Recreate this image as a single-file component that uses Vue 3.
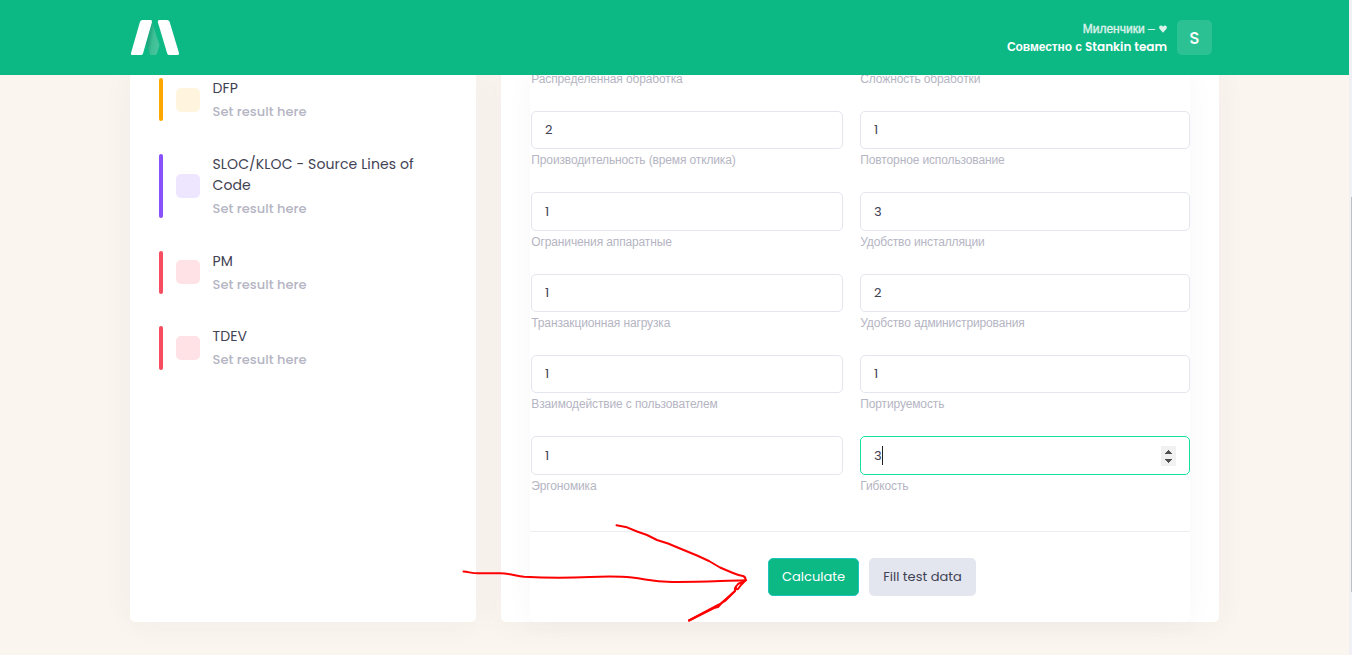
<script setup>
const metrics = [
  { title: 'DFP', tone: 'amber' },
  { title: 'SLOC/KLOC - Source Lines of Code', tone: 'violet' },
  { title: 'PM', tone: 'rose' },
  { title: 'TDEV', tone: 'rose' },
]
const rows = [
  [{ value: '2', label: 'Производительность (время отклика)' }, { value: '1', label: 'Повторное использование' }],
  [{ value: '1', label: 'Ограничения аппаратные' }, { value: '3', label: 'Удобство инсталляции' }],
  [{ value: '1', label: 'Транзакционная нагрузка' }, { value: '2', label: 'Удобство администрирования' }],
  [{ value: '1', label: 'Взаимодействие с пользователем' }, { value: '1', label: 'Портируемость' }],
  [{ value: '1', label: 'Эргономика' }, { value: '3', label: 'Гибкость', active: true }],
]
</script>

<template>
  <div class="page">
    <div class="view">
      <header class="header">
        <svg class="logo" width="50" height="36" viewBox="0 0 50 36">
          <defs>
            <linearGradient id="leaf" x1="0" y1="0.2" x2="1" y2="0.6">
              <stop offset="0" stop-color="#0a8f68" />
              <stop offset="0.55" stop-color="#3fbf96" />
              <stop offset="1" stop-color="#48c49d" />
            </linearGradient>
          </defs>
          <path d="M22 2 L29.500 25 L27 33.500 Q26.600 35 25 35 H21.500 Q20 35 19.500 33.500 L16.500 24 Z" fill="url(#leaf)" />
          <path d="M12.500 0 H20.500 Q22.500 0 22 2 L13 33.500 Q12.500 35 11 35 H2 Q0.300 35 1 33 L10 1.800 Q10.600 0 12.500 0 Z" fill="#fff" />
          <path d="M29.500 0 H37 Q39 0 39.600 1.800 L49 33 Q49.500 35 47.500 35 H39.500 Q37.700 35 37.200 33.500 L27.800 2 Q27.400 0 29.500 0 Z" fill="#fff" />
        </svg>
        <div class="user">
          <div class="names">
            <span class="team">Миленчики – <svg class="heart" width="8" height="8" viewBox="0 0 8 8"><path d="M4 7.700 L0.500 3.700 C-0.400 2 .5 .5 2 .5 Q3.300 .5 4 1.700 Q4.700 .5 6 .5 C7.500 .5 8.400 2 7.500 3.700 Z" fill="currentColor" /></svg></span>
            <span class="partner">Совместно с <span class="latin">Stankin team</span></span>
          </div>
          <span class="avatar">S</span>
        </div>
      </header>
      <main class="content">
        <section class="card side">
          <div v-for="m in metrics" :key="m.title" class="metric" :class="m.tone">
            <span class="bar"></span>
            <span class="box"></span>
            <div class="info">
              <span class="title">{{ m.title }}</span>
              <span class="sub">Set result here</span>
            </div>
          </div>
        </section>
        <section class="card main">
          <div class="form">
            <div class="row first">
              <span class="label">Распределенная обработка</span>
              <span class="label">Сложность обработки</span>
            </div>
            <div v-for="(r, i) in rows" :key="i" class="row">
              <div v-for="f in r" :key="f.label" class="field">
                <div class="input" :class="{ active: f.active }">
                  <span class="value">{{ f.value }}</span>
                  <template v-if="f.active">
                    <span class="caret"></span>
                    <svg class="spin" width="15" height="20" viewBox="0 0 15 20" shape-rendering="crispEdges">
                      <rect width="15" height="20" fill="#f1f1f1" />
                      <path d="M4 8 L7.500 4 L11 8 Z M4 13 L7.500 17 L11 13 Z" fill="#505050" />
                    </svg>
                  </template>
                </div>
                <span class="label">{{ f.label }}</span>
              </div>
            </div>
            <div class="actions">
              <button class="btn primary">Calculate</button>
              <button class="btn secondary">Fill test data</button>
            </div>
          </div>
        </section>
      </main>
      <svg class="arrow" width="300" height="110" viewBox="455 520 300 110" fill="none" stroke="#fe0000" stroke-width="2" stroke-linecap="round" stroke-linejoin="round">
        <path d="M463.500 571.500 C469 572 472 573.300 478 573.300 H500 C510 573.300 516 576 524 576.700 C548 578 570 577.800 590 577 C606 576.300 620 576.300 632 577.500 C647 579 650 581.500 672 582 C698 582.300 718 581 746 580.300" />
        <path d="M616.500 525.300 L627 527.300 L637 531.500 L647 535 L657 540 L668 543.500 L680 548.500 L697 555.500 L709 561 L720 567.500 L733 573 Q739 575.500 743 576 Q746 577 745.500 580.300 L738 584 L735 588 L735 591 L725 601 L719 604.500 L689 620.500" />
        <path d="M745.500 580.300 L741 585 L738 589 Q735 590 736 586.500 M735 591 L722 602.500 L718 607 L714 608 L689 620.500" />
      </svg>
    </div>
    <div class="scroll"><span class="thumb"></span></div>
  </div>
</template>

<style>
body { margin: 0; }
</style>

<style scoped>
.page { width: 1352px; height: 655px; display: flex; overflow: hidden; background: #faf5ef; font-family: Poppins, Inter, "Liberation Sans", sans-serif; font-size: 13px; color: #3f4254; }
.page * { box-sizing: border-box; }
.view { position: relative; width: 1349px; height: 655px; overflow: hidden; }
.header { position: relative; z-index: 2; height: 75px; padding: 0 137px 0 130px; display: flex; align-items: center; justify-content: space-between; background: #0cb884; color: #fff; }
.user { display: flex; align-items: center; gap: 10px; }
.names { display: flex; flex-direction: column; align-items: flex-end; font-family: "Liberation Sans", sans-serif; font-size: 12px; line-height: 18px; white-space: nowrap; }
.team { opacity: .85; -webkit-text-stroke: .35px; }
.heart { margin-left: 1px; }
.partner { font-weight: 700; letter-spacing: -.08px; }
.latin { font-family: Poppins, Inter, sans-serif; font-size: 12px; font-weight: 600; letter-spacing: 0; }
.avatar { width: 35px; height: 35px; border-radius: 5px; background: rgba(255,255,255,.13); display: flex; align-items: center; justify-content: center; font-size: 17px; font-weight: 500; }
.content { display: flex; gap: 25px; padding-left: 130px; height: 547px; }
.card { background: #fff; border-radius: 0 0 5px 5px; box-shadow: 0 0 30px rgba(82,63,105,.05); }
.side { width: 346px; padding: 3px 29px 0; }
.metric { display: flex; align-items: center; margin-bottom: 32.4px; }
.bar { align-self: stretch; width: 4px; border-radius: 2px; }
.box { width: 24px; height: 24px; margin: 0 12.500px 0 13px; border-radius: 5px; flex: none; }
.amber .bar { background: #ffa800; } .amber .box { background: #fff4de; }
.violet .bar { background: #8950fc; } .violet .box { background: #eee5ff; }
.rose .bar { background: #f64e60; } .rose .box { background: #ffe2e5; }
.info { display: flex; flex-direction: column; width: 215px; }
.title { font-size: 14.040px; line-height: 21.060px; letter-spacing: .1px; }
.sub { font-size: 13px; line-height: 22.300px; position: relative; top: 2px; color: #b5b5c3; font-weight: 500; letter-spacing: .03px; }
.main { width: 718px; padding: 0 29px; }
.form { height: 547px; background: #fff; border-radius: 0 0 5px 5px; box-shadow: 0 0 30px rgba(50,50,70,.035); }
.row { display: grid; grid-template-columns: 312px 330px; column-gap: 17px; padding-left: 1px; height: 81.350px; }
.row.first { height: 36px; }
.row.first .label { margin-top: -5px; }
.field { display: flex; flex-direction: column; }
.input { height: 38.400px; border: 1px solid #e4e6ef; border-radius: 5px; padding: 0 13px; display: flex; align-items: center; }
.input.active { border-color: #14e0a0; }
.value { font-size: 13px; line-height: 20px; }
.caret { width: 1px; height: 19px; background: #222; }
.spin { margin-left: auto; }
.label { font-family: "Liberation Sans", sans-serif; font-size: 12px; line-height: 18px; margin-top: 2.070px; color: #b5b5c3; white-space: nowrap; letter-spacing: -.13px; text-indent: .3px; }
.actions { margin-top: 13.250px; height: 91px; border-top: 1px solid #ebedf3; display: flex; justify-content: center; gap: 10px; padding: 26px 0 0 24px; }
.btn { height: 38px; border: 0; border-radius: 5px; font-family: inherit; font-size: 13px; padding: 0; color: #3f4254; }
.primary { width: 91px; background: #0cb884; border: 1px solid #1bc5bd; color: #fff; }
.secondary { width: 107px; background: #e4e6ef; }
.arrow { position: absolute; left: 455px; top: 520px; z-index: 3; }
.scroll { width: 3px; height: 655px; background: #f1f1f5; padding: 197px 0 0 2px; }
.thumb { display: block; width: 1px; height: 395px; background: #c1c1c5; }
</style>
